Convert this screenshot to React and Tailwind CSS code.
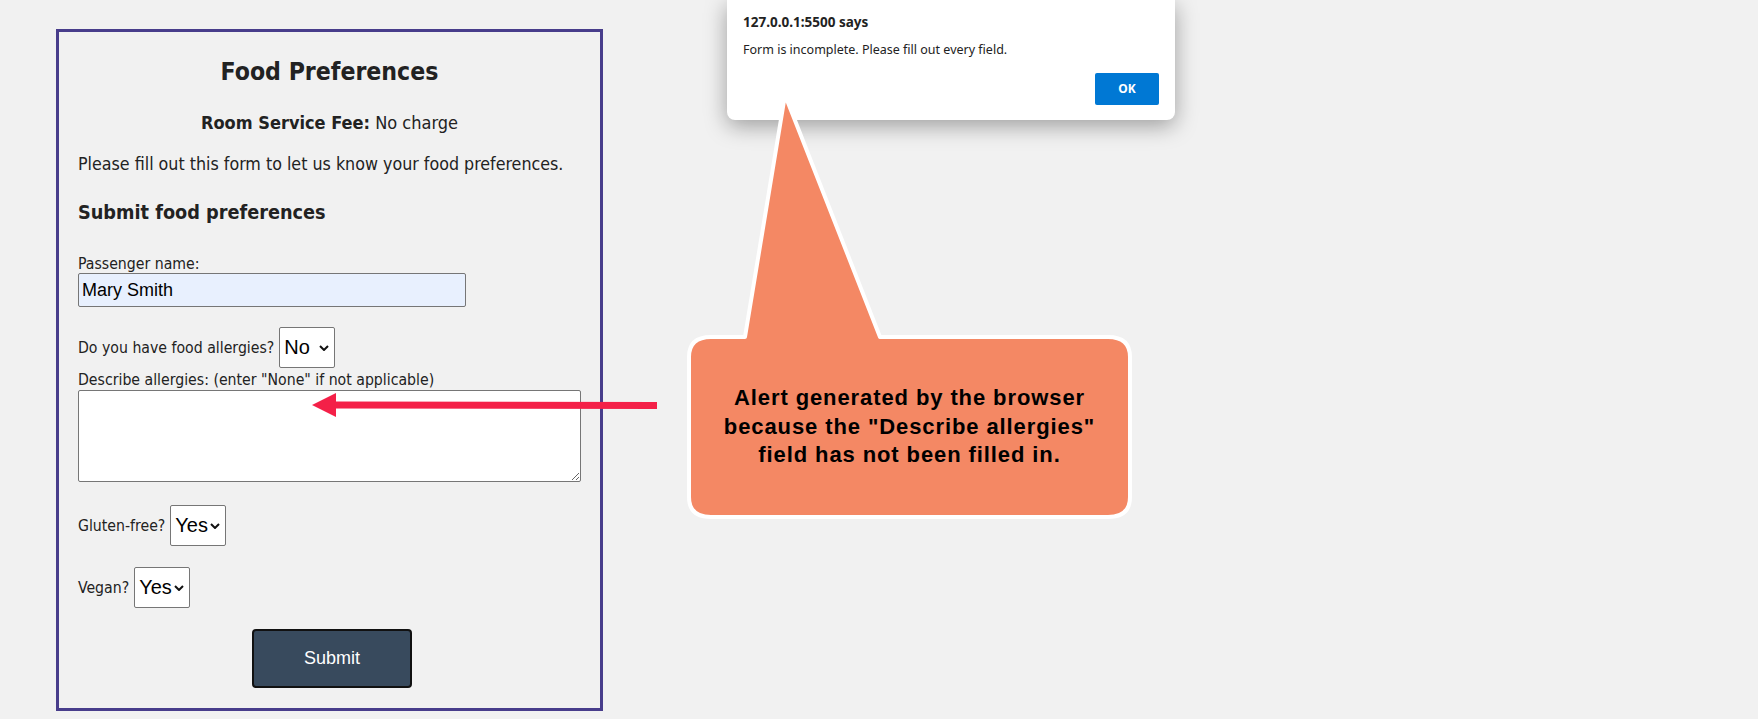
import React from 'react';

const formFont = "font-['DejaVu_Sans_Condensed','DejaVu_Sans',sans-serif]";

const Chevron = () => (
    <svg className="absolute right-[6px] top-1/2 -translate-y-1/2 pointer-events-none" width="10" height="6" viewBox="0 0 10 6">
        <path d="M1 1 L5 5 L9 1" fill="none" stroke="#111" strokeWidth="2" />
    </svg>
);

const YesNo = ({ value }) => (
    <span className="relative inline-block align-middle">
        <select
            defaultValue={value}
            className="appearance-none w-[56px] h-[41px] pl-[4px] bg-white border border-[#767676] rounded-[2px] text-[20px] text-black font-['Liberation_Sans',Arial,sans-serif]"
        >
            <option>Yes</option>
            <option>No</option>
        </select>
        <Chevron />
    </span>
);

const App = () => {
    return (
        <div className="relative w-full h-[719px] bg-[#f1f1f1] overflow-hidden">
            {/* Form card */}
            <div className="ml-[56px] pt-[29px]">
                <form className={`w-[547px] border-[3px] border-[#483d8b] px-[19px] pb-[20px] text-[#222] ${formFont}`}>
                    <h2 className="mt-[24px] text-center text-[24.6px] leading-[32px] font-bold">Food Preferences</h2>
                    <p className="mt-[23px] text-center text-[18px] leading-[24px]">
                        <strong>Room Service Fee:</strong> No charge
                    </p>
                    <p className="mt-[17px] text-[17.7px] leading-[24px]">Please fill out this form to let us know your food preferences.</p>
                    <h3 className="mt-[23px] text-[19.7px] leading-[28px] font-bold">Submit food preferences</h3>

                    <label className="block mt-[27px] text-[15.7px] leading-[19px]">Passenger name:</label>
                    <input
                        type="text"
                        defaultValue="Mary Smith"
                        className="block w-[388px] h-[34px] px-[3px] bg-[#e8f0fe] border border-[#767676] rounded-[2px] text-[18px] text-black font-['Liberation_Sans',Arial,sans-serif]"
                    />

                    <div className="mt-[20px] flex items-center gap-[5px] text-[15.7px] leading-[19px]">
                        <span>Do you have food allergies?</span>
                        <YesNo value="No" />
                    </div>
                    <label className="block mt-[2px] text-[15.7px] leading-[19px]">Describe allergies: (enter "None" if not applicable)</label>
                    <textarea className="block mt-[1px] w-[503px] h-[92px] bg-white border border-[#767676] rounded-[2px]" />

                    <div className="mt-[23px] flex items-center gap-[5px] text-[15.7px] leading-[19px]">
                        <span>Gluten-free?</span>
                        <YesNo value="Yes" />
                    </div>
                    <div className="mt-[21px] flex items-center gap-[5px] text-[15.7px] leading-[19px]">
                        <span>Vegan?</span>
                        <YesNo value="Yes" />
                    </div>

                    <div className="mt-[21px] flex justify-center">
                        <button
                            type="button"
                            className="ml-[5px] w-[160px] h-[59px] bg-[#384a5d] border-2 border-[#111] rounded-[4px] text-white text-[18px] font-['Liberation_Sans',Arial,sans-serif]"
                        >
                            Submit
                        </button>
                    </div>
                </form>
            </div>

            {/* Browser alert dialog */}
            <div className="absolute left-[727px] top-0 w-[448px] h-[120px] bg-white rounded-b-[8px] shadow-[0_6px_22px_rgba(0,0,0,0.35)] font-['Noto_Sans','Open_Sans',sans-serif]">
                <div className="pl-[16px] pt-[12px] text-[13.5px] leading-[20px] font-bold text-[#222]">127.0.0.1:5500 says</div>
                <div className="pl-[16px] mt-[8px] text-[12.5px] leading-[20px] text-[#222]">Form is incomplete. Please fill out every field.</div>
                <div className="flex justify-end pr-[16px] mt-[13px]">
                    <button type="button" className="w-[64px] h-[32px] bg-[#0078d4] rounded-[2px] text-white text-[12px] font-bold">OK</button>
                </div>
            </div>

            {/* Callout bubble */}
            <svg className="absolute left-[686px] top-[92px]" width="448" height="430" viewBox="0 0 448 430">
                <path
                    d="M25 245 H59 L99 3 L194 245 H422 Q444 245 444 265 V405 Q444 425 422 425 H25 Q3 425 3 405 V265 Q3 245 25 245 Z"
                    fill="#f48864"
                    stroke="#ffffff"
                    strokeWidth="4"
                    strokeLinejoin="round"
                />
            </svg>
            <div className="absolute left-[689px] top-[337px] w-[441px] h-[180px] flex items-center justify-center text-center text-black text-[22px] leading-[28.5px] font-bold tracking-[0.9px] font-['Liberation_Sans',Arial,sans-serif]">
                Alert generated by the browser<br />
                because the "Describe allergies"<br />
                field has not been filled in.
            </div>

            {/* Red arrow */}
            <svg className="absolute left-[310px] top-[390px]" width="352" height="30" viewBox="0 0 352 30">
                <line x1="24" y1="15" x2="347" y2="15.5" stroke="#f42048" strokeWidth="7" />
                <polygon points="2,15 26,3 26,27" fill="#f42048" />
            </svg>
        </div>
    );
};

export default App;
